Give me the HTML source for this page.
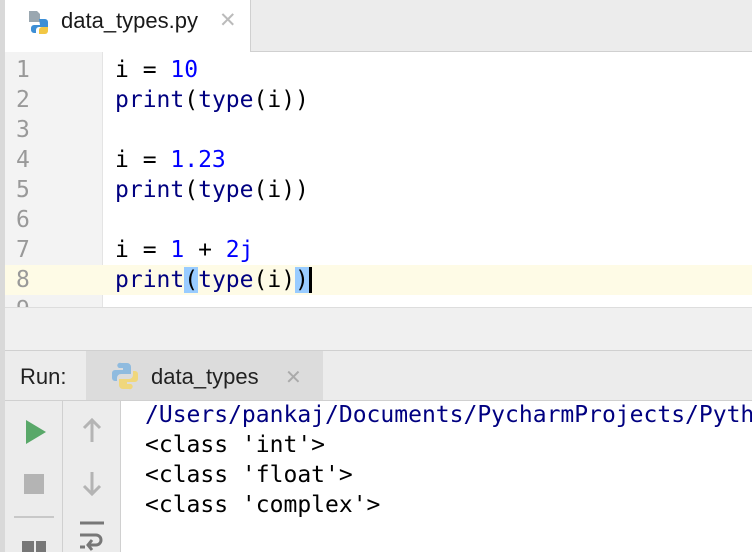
<!DOCTYPE html>
<html><head><style>
body{margin:0;width:752px;height:552px;overflow:hidden;background:#f0f0f0;position:relative;font-family:"DejaVu Sans Mono",monospace;}
.abs{position:absolute}
.mono{font-family:"DejaVu Sans Mono",monospace;font-size:23px;white-space:pre;line-height:30px}
.sans{font-family:"Liberation Sans",sans-serif}
.n{color:#0000ff}.f{color:#000080}
</style></head><body>
<div class="abs" style="left:0;top:0;width:5px;height:552px;background:#d9d9d9"></div>
<div class="abs" style="left:5px;top:0;width:747px;height:51px;background:#ececec;border-bottom:1px solid #d0d0d0"></div>
<div class="abs" style="left:5px;top:0;width:245px;height:52px;background:#fff;border-right:1px solid #d0d0d0"></div>
<svg class="abs" style="left:27px;top:7px" width="28" height="32" viewBox="0 0 28 32">
<path d="M2 4h8l3 3v8H2z" fill="#9aa7b0"/>
<path d="M12 12h6a3 3 0 0 1 3 3v5h-9a3 3 0 0 0-3 3v3H7a3 3 0 0 1-3-3v-2a3 3 0 0 1 3-3h6z" fill="#3d8fd6"/>
<path d="M21 20v4a3 3 0 0 1-3 3h-6v-4a3 3 0 0 1 3-3z" fill="#f2c744"/>
</svg>
<div class="abs sans" style="left:61px;top:8px;font-size:22px;color:#1a1a1a">data_types.py</div>
<div class="abs sans" style="left:219px;top:8px;font-size:21px;color:#bbb">✕</div>
<div class="abs" style="left:5px;top:52px;width:747px;height:255px;background:#fff"></div>
<div class="abs" style="left:5px;top:52px;width:97px;height:255px;background:#f3f3f3"></div>
<div class="abs" style="left:102px;top:52px;width:1px;height:255px;background:#e4e4e4"></div>
<div class="abs" style="left:5px;top:265px;width:747px;height:30px;background:#fefbe6"></div>
<div class="abs mono" style="left:16px;top:55px;color:#999;height:252px;overflow:hidden">1
2
3
4
5
6
7
8
9</div>
<div class="abs" style="left:5px;top:307px;width:747px;height:43px;background:#f0f0f0;border-top:1px solid #ddd"></div>
<div class="abs mono" style="left:115px;top:55px;color:#000">i = <span class="n">10</span>
<span class="f">print</span>(<span class="f">type</span>(i))

i = <span class="n">1.23</span>
<span class="f">print</span>(<span class="f">type</span>(i))

i = <span class="n">1</span> + <span class="n">2j</span>
<span class="f">print</span><span style="background:#99ccff">(</span><span class="f">type</span>(i)<span style="background:#99ccff">)</span><span style="border-left:3px solid #000"></span></div>
<div class="abs" style="left:5px;top:350px;width:747px;height:1px;background:#d0d0d0"></div>
<div class="abs" style="left:5px;top:351px;width:747px;height:49px;background:#ececec;border-bottom:1px solid #d0d0d0"></div>
<div class="abs" style="left:86px;top:351px;width:237px;height:49px;background:#dcdcdc"></div>
<div class="abs sans" style="left:20px;top:364px;font-size:22px;color:#222">Run:</div>
<svg class="abs" style="left:111px;top:362px" width="28" height="28" viewBox="0 0 28 28">
<path d="M10 1h6a4 4 0 0 1 4 4v7h-10a4 4 0 0 0-4 4v3H4a3 3 0 0 1-3-3v-5a3 3 0 0 1 3-3h8V6H8a2 2 0 0 1 2-5z" fill="#8fbbdf"/>
<path d="M22 9h2a3 3 0 0 1 3 3v5a3 3 0 0 1-3 3h-8v2h4a2 2 0 0 1-2 5h-6a4 4 0 0 1-4-4v-6h10a4 4 0 0 0 4-4z" fill="#f0d77c"/>
</svg>
<div class="abs sans" style="left:151px;top:364px;font-size:22px;color:#222">data_types</div>
<div class="abs sans" style="left:285px;top:365px;font-size:20px;color:#aaa">✕</div>
<div class="abs" style="left:5px;top:401px;width:57px;height:151px;background:#ececec;border-right:1px solid #d0d0d0"></div>
<div class="abs" style="left:63px;top:401px;width:57px;height:151px;background:#ececec;border-right:1px solid #d0d0d0"></div>
<div class="abs" style="left:121px;top:401px;width:631px;height:151px;background:#fff;overflow:hidden">
<div class="abs mono" style="left:24px;top:-1px;color:#000"><span class="f">/Users/pankaj/Documents/PycharmProjects/Pyth</span>
&lt;class 'int'&gt;
&lt;class 'float'&gt;
&lt;class 'complex'&gt;</div></div>
<svg class="abs" style="left:0;top:400px" width="121" height="152">
<path d="M26 20l20 12-20 12z" fill="#59a869"/>
<rect x="24" y="74" width="20" height="20" fill="#b4b4b4"/>
<rect x="14" y="116" width="40" height="2" fill="#c8c8c8"/>
<rect x="22" y="141" width="12" height="11" fill="#777"/><rect x="36" y="141" width="10" height="11" fill="#777"/>
<path d="M92 20v22M84 28l8-8 8 8" stroke="#b4b4b4" stroke-width="3" fill="none"/>
<path d="M92 72v22M84 86l8 8 8-8" stroke="#b4b4b4" stroke-width="3" fill="none"/>
<path d="M80 123h24M80 135h16a5 5 0 0 1 0 10h-6M92 140l-4 5 4 5M80 147h5" stroke="#777" stroke-width="3" fill="none"/>
</svg>
</body></html>
